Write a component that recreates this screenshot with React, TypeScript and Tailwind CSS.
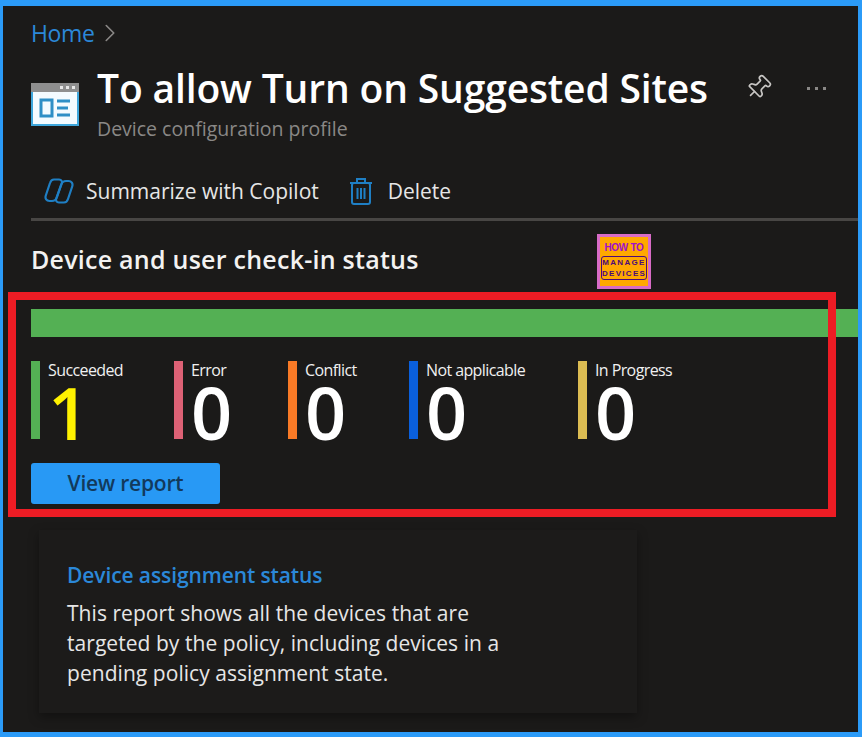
import { Pin, ChevronRight } from 'lucide-react';

// Status legend items under the green bar
const statuses = [
  { label: 'Succeeded', value: '1', bar: 'bg-[#54b054]', valueColor: 'text-[#fff200]', width: 'w-[143px]' },
  { label: 'Error', value: '0', bar: 'bg-[#dd6175]', valueColor: 'text-white', width: 'w-[114px]' },
  { label: 'Conflict', value: '0', bar: 'bg-[#f97a26]', valueColor: 'text-white', width: 'w-[121px]' },
  { label: 'Not applicable', value: '0', bar: 'bg-[#0a5fdc]', valueColor: 'text-white', width: 'w-[169px]' },
  { label: 'In Progress', value: '0', bar: 'bg-[#dcbc52]', valueColor: 'text-white', width: 'w-[120px]' },
];

const PortalIcon = () => (
  <svg width="48" height="43" viewBox="0 0 48 43" className="shrink-0">
    <rect width="48" height="43" rx="1" fill="#f4fbff" />
    <rect width="48" height="9" fill="#8f8f8f" />
    <rect x="29" y="3" width="3" height="3" fill="#e8e8e8" />
    <rect x="35" y="3" width="3" height="3" fill="#e8e8e8" />
    <rect x="41" y="3" width="3" height="3" fill="#e8e8e8" />
    <path d="M0 9v34h48V9h-2v32H2V9z" fill="#3fa7dc" />
    <rect x="10" y="17" width="11" height="16" fill="none" stroke="#2f8fc6" strokeWidth="3" />
    <path d="M26 18h13M26 25h11M26 32h13" stroke="#2f8fc6" strokeWidth="3" />
  </svg>
);

const CopilotIcon = () => (
  <svg width="30" height="26" viewBox="0 0 30 26" fill="none" stroke="#1f7fc4" strokeWidth="2.2" strokeLinejoin="round">
    <path d="M10 1.500h5c2.500 0 3.500 2 2.700 4.200L13 19c-.9 2.600-2.500 4-5 4H5.500C2.500 23 .8 20.500 1.800 17.500L6 5c.7-2.300 2-3.500 4-3.500z" />
    <path d="M20 24.500h-5c-2.500 0-3.500-2-2.700-4.200L17 7c.9-2.600 2.500-4 5-4h2.500c3 0 4.700 2.500 3.700 5.500L24 21c-.7 2.300-2 3.500-4 3.500z" />
  </svg>
);

const TrashIcon = () => (
  <svg width="24" height="29" viewBox="0 0 24 29" fill="none" stroke="#1f7fc4" strokeWidth="2">
    <path d="M1 6h22M8 6V2h8v4" />
    <rect x="3" y="6" width="18" height="21" rx="2" />
    <path d="M8.500 11v11M12 11v11M15.500 11v11" />
  </svg>
);

const DotsIcon = () => (
  <svg width="20" height="4" viewBox="0 0 20 4" fill="#8a8886">
    <rect x="0" y="1" width="3" height="3" />
    <rect x="8" y="1" width="3" height="3" />
    <rect x="16" y="1" width="3" height="3" />
  </svg>
);

export default function App() {
  return (
    <div className="relative h-[737px] w-[862px] overflow-hidden border-t-[6px] border-r-[4px] border-b-[5px] border-l-[3px] border-[#2b9bf8] bg-[#1b1a19] font-['Open_Sans',sans-serif]">
      {/* Breadcrumb */}
      <div className="flex h-[50px] items-center gap-[1px] pt-[4px] pl-[28px]">
        <span className="text-[23px] leading-none tracking-[-0.4px] text-[#2b88d8]">Home</span>
        <ChevronRight size={30} strokeWidth={1.3} className="text-[#8a8886]" />
      </div>

      {/* Title */}
      <div className="flex items-start pl-[28px]">
        <div className="mt-[27px] mr-[18px]">
          <PortalIcon />
        </div>
        <div className="w-[610px]">
          <h1 className="mt-[3px] text-[39px] leading-[57px] font-semibold tracking-[-0.15px] whitespace-nowrap text-white">
            To allow Turn on Suggested Sites
          </h1>
          <p className="text-[19.5px] leading-[26px] text-[#8a8886]">Device configuration profile</p>
        </div>
        <div className="mt-[18px] ml-[38px] flex items-center gap-[35px]">
          <Pin size={27} strokeWidth={1.5} className="rotate-45 text-[#c8c6c4]" />
          <DotsIcon />
        </div>
      </div>

      {/* Toolbar */}
      <div className="mt-[25px] ml-[28px] flex h-[54px] items-start border-b-[3px] border-[#484644] pt-[9px] pl-[13px]">
        <div className="flex items-center gap-[12px]">
          <CopilotIcon />
          <span className="text-[21px] leading-[30px] font-medium tracking-[0px] text-[#e6e6e6]">Summarize with Copilot</span>
        </div>
        <div className="ml-[30px] flex items-center gap-[15px]">
          <TrashIcon />
          <span className="text-[21px] leading-[30px] font-medium tracking-[0px] text-[#e6e6e6]">Delete</span>
        </div>
      </div>

      {/* Check-in status */}
      <h2 className="mt-[21px] ml-[28px] text-[25px] leading-[34px] font-semibold tracking-[0.25px] text-[#f3f2f1]">
        Device and user check-in status
      </h2>
      <div className="mt-[33px] ml-[28px] h-[28px] bg-[#54b054]" />
      <div className="mt-[24px] ml-[28px] flex">
        {statuses.map((s) => (
          <div key={s.label} className={`flex ${s.width}`}>
            <div className={`h-[78px] w-[9px] ${s.bar}`} />
            <div className="ml-[8px]">
              <div className="text-[16px] leading-[18px] font-medium tracking-[-0.6px] whitespace-nowrap text-[#f0f0f0]">{s.label}</div>
              <div className={`mt-[3px] text-[72px] leading-[60px] font-semibold tracking-[-2px] ${s.valueColor}`}>{s.value}</div>
            </div>
          </div>
        ))}
      </div>
      <button className="mt-[21px] ml-[28px] flex h-[41px] w-[189px] items-center justify-center rounded-[3px] bg-[#2899f5] text-[21px] font-semibold tracking-[-0.2px] text-[#123a5c]">
        View report
      </button>

      {/* Report card */}
      <div className="mt-[26px] ml-[36px] h-[183px] w-[598px] bg-[#1c1b1a] px-[28px] pt-[31px] shadow-[0_4px_10px_rgba(0,0,0,0.35)]">
        <div className="text-[21px] leading-[28px] font-semibold tracking-[-0.1px] text-[#2b88d8]">Device assignment status</div>
        <p className="mt-[9px] w-[450px] text-[21px] leading-[30px] tracking-[0.05px] text-[#e6e6e6]">
          This report shows all the devices that are targeted by the policy, including devices in a pending policy assignment state.
        </p>
      </div>

      {/* Highlight box drawn over the status area */}
      <div className="absolute top-[286px] left-[5px] h-[225px] w-[828px] border-[8px] border-[#ed1c24]" />

      {/* Watermark logo */}
      <div className="absolute top-[228px] left-[594px] flex h-[55px] w-[54px] flex-col items-center border-[3px] border-[#d86bc6] bg-[#ffa800] font-['Liberation_Sans',sans-serif] font-bold">
        <div className="mt-[5px] text-[10px] leading-[11px] tracking-[-0.3px] whitespace-nowrap text-[#a010c8]">HOW TO</div>
        <div className="mt-[3px] w-[46px] rounded-[3px] border border-[#4b0a78] text-center text-[8px] leading-[11px] tracking-[1.3px] whitespace-nowrap text-[#4b0a78]">
          MANAGE<br />DEVICES
        </div>
      </div>
    </div>
  );
}
